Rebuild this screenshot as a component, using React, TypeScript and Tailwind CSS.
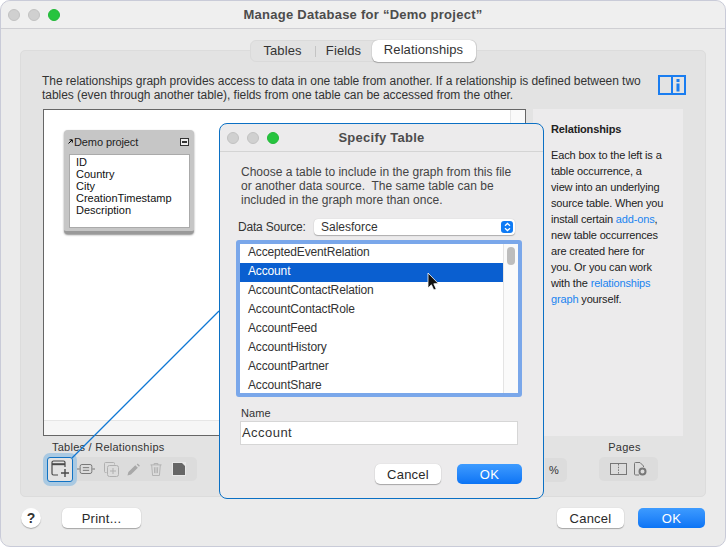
const font = { fontFamily: '"Liberation Sans", Arial, sans-serif' };

function Lights({ left = 'ml-[6px]' }: { left?: string }) {
  return (
    <div className={`flex gap-[8px] ${left}`}>
      <span className="w-[12px] h-[12px] rounded-full bg-[#d0d0d0] border border-[#c2c2c2]" />
      <span className="w-[12px] h-[12px] rounded-full bg-[#d0d0d0] border border-[#c2c2c2]" />
      <span className="w-[12px] h-[12px] rounded-full bg-[#27c43f] border border-[#22b838]" />
    </div>
  );
}

function Btn({ children, primary, w }: { children: string; primary?: boolean; w: string }) {
  return primary ? (
    <button className={`block ${w} h-[20px] rounded-[5px] bg-gradient-to-b from-[#3d9bff] to-[#0a74f5] text-white text-[13px] leading-[19px] tracking-[0.3px]`}>{children}</button>
  ) : (
    <button className={`block ${w} h-[20px] rounded-[5px] bg-white text-[#2a2a2a] text-[13px] leading-[19px] tracking-[0.25px] shadow-[0_1px_1px_rgba(0,0,0,0.28),0_0_1px_rgba(0,0,0,0.2)]`}>{children}</button>
  );
}

function NewTableIcon() {
  return (
    <svg width="22" height="20" viewBox="0 0 22 20" fill="none" stroke="#4a4a4a" strokeWidth="1.2">
      <path d="M9 16H4.5a1.5 1.5 0 0 1-1.5-1.5V3.5A1.5 1.5 0 0 1 4.5 2h10A1.5 1.5 0 0 1 16 3.5V8" />
      <path d="M3 5.2h13" strokeWidth="2" />
      <path d="M16 10v8M12 14h8" strokeWidth="1.4" />
    </svg>
  );
}

function ToolIcons() {
  return (
    <>
      <svg width="18" height="12" viewBox="0 0 20 12" fill="none" stroke="#777" strokeWidth="1.1">
        <path d="M0 6h3M17 6h3" />
        <rect x="3.5" y="1" width="13" height="10" rx="2" />
        <path d="M6.5 4.5h7M6.5 7.5h7" />
      </svg>
      <svg className="ml-[1px]" width="15" height="15" viewBox="0 0 15 15" fill="none" stroke="#b0b0b0" strokeWidth="1">
        <path d="M2.5 10.5h-1a1 1 0 0 1-1-1v-8a1 1 0 0 1 1-1h8a1 1 0 0 1 1 1v1" />
        <rect x="3.5" y="3.5" width="11" height="11" rx="2" />
        <path d="M9 6v6M6 9h6" />
      </svg>
      <svg width="13" height="13" viewBox="0 0 14 14" fill="#a8a8a8">
        <path d="M0.5 13.5l1-3.8 7.4-7.4 2.8 2.8-7.4 7.4zM10.5 1.6l1-1 2.4 2.4-1 1z" />
      </svg>
      <svg className="ml-[2px]" width="12" height="15" viewBox="0 0 13 15" fill="none" stroke="#b0b0b0" strokeWidth="1">
        <path d="M0.5 2.5h12M4.5 2.5v-1.5h4v1.5M1.8 2.5l1 11.5h7.4l1-11.5M4.7 5l.3 6.5M8.3 5l-.3 6.5M6.5 5v6.5" />
      </svg>
      <svg className="ml-[2px]" width="14" height="14" viewBox="0 0 14 14">
        <rect x="0" y="0" width="14" height="14" fill="#e8e8e8" />
        <path d="M1 1h9l3 3v9H1z" fill="#666" />
      </svg>
    </>
  );
}

const rows = ['AcceptedEventRelation', 'Account', 'AccountContactRelation', 'AccountContactRole', 'AccountFeed', 'AccountHistory', 'AccountPartner', 'AccountShare'];

function Dialog() {
  return (
    <div className="absolute left-[219px] top-[123px] w-[325px] h-[376px] rounded-[8px] border border-[#0b70c4] bg-[#ecebec] flex flex-col z-20">
      <div className="h-[28px] shrink-0 border-b border-[#d4d4d4] flex items-center relative">
        <Lights left="ml-[7px]" />
        <div className="absolute inset-0 flex items-center justify-center text-[13px] font-bold text-[#4c4c4c] tracking-[0.25px]">Specify Table</div>
      </div>
      <div className="pl-[21px] pt-[13px] text-[12px] leading-[14px] text-[#444] whitespace-pre">
        {'Choose a table to include in the graph from this file\nor another data source.  The same table can be\nincluded in the graph more than once.'}
      </div>
      <div className="flex items-center mt-[11px] h-[17px]">
        <span className="ml-[18px] w-[76px] text-[12px] text-[#333] tracking-[-0.2px]">Data Source:</span>
        <div className="w-[201px] h-[16px] rounded-[4px] bg-white shadow-[0_1px_1px_rgba(0,0,0,0.25),0_0_1px_rgba(0,0,0,0.2)] flex items-center justify-between pl-[7px] pr-[2px] text-[12px] text-[#333]">
          <span>Salesforce</span>
          <span className="w-[12px] h-[12px] rounded-[3px] bg-[#0f7bf5] flex items-center justify-center">
            <svg width="7" height="10" viewBox="0 0 7 10" fill="none" stroke="white" strokeWidth="1.3"><path d="M1 3.8L3.5 1.5 6 3.8M1 6.2l2.5 2.3L6 6.2" /></svg>
          </span>
        </div>
      </div>
      <div className="mt-[5px] ml-[16px] w-[286px] h-[157px] border-[4px] border-[#7aa7ea] rounded-[3px] bg-white flex overflow-hidden">
        <div className="flex-1 flex flex-col">
          {rows.map((r) => (
            <div key={r} className={`h-[19px] shrink-0 pl-[8px] text-[12px] leading-[17px] tracking-[-0.15px] ${r === 'Account' ? 'bg-[#0a5fd0] text-white' : 'text-[#333]'}`}>{r}</div>
          ))}
        </div>
        <div className="w-[15px] border-l border-[#e4e4e4] bg-[#fafafa] pl-[3px] pt-[3px]">
          <div className="w-[8px] h-[18px] rounded-[4px] bg-[#bdbdbd]" />
        </div>
      </div>
      <div className="ml-[21px] mt-[9px] text-[11px] leading-[14px] text-[#333] tracking-[0.1px]">Name</div>
      <div className="ml-[20px] mt-[1px] w-[278px] h-[24px] bg-white border border-[#d6d6d6] pl-[1px] text-[13px] leading-[22px] text-[#333] tracking-[0.45px]">Account</div>
      <div className="flex justify-end gap-[16px] mt-[19px] pr-[21px]">
        <Btn w="w-[66px]">Cancel</Btn>
        <Btn w="w-[65px]" primary>OK</Btn>
      </div>
    </div>
  );
}

export default function App() {
  return (
    <div className="relative w-[726px] h-[547px] bg-white overflow-hidden" style={font}>
      <div className="w-[726px] h-[547px] rounded-[10px] border border-[#c9cbd8] bg-[#ebebeb] flex flex-col">
        <div className="h-[28px] shrink-0 border-b border-[#cfcfd3] bg-[#efefef] rounded-t-[10px] flex items-center relative">
          <Lights left="ml-[7px]" />
          <div className="absolute inset-0 flex items-center justify-center text-[13px] font-bold text-[#4c4c4c] tracking-[0.25px]">Manage Database for “Demo project”</div>
        </div>

        <div className="px-[19px] pt-[11px] flex flex-col flex-1">
          <div className="self-center -mb-[12px] z-10 flex items-center w-[227px] h-[22px] rounded-[6px] bg-[#e2e2e2] border border-[#dadada] text-[13px] tracking-[0.1px] text-[#333]">
            <span className="w-[64px] text-center">Tables</span>
            <span className="w-px h-[11px] bg-[#c4c4c4]" />
            <span className="w-[56px] text-center">Fields</span>
            <span className="flex-1 h-[22px] rounded-[6px] bg-white text-center leading-[20px] shadow-[0_1px_1px_rgba(0,0,0,0.25),0_0_1px_rgba(0,0,0,0.3)]">Relationships</span>
          </div>

          <div className="w-[686px] h-[447px] rounded-[5px] bg-[#e3e3e3] border border-[#dcdcdc] flex flex-col relative">
            <div className="flex items-start pl-[21px] pt-[23px]">
              <div className="w-[615px] text-[12px] leading-[14px] text-[#333] tracking-[-0.05px] whitespace-pre">
                <div>The relationships graph provides access to data in one table from another. If a relationship is defined between two</div>
                <div>tables (even through another table), fields from one table can be accessed from the other.</div>
              </div>
              <svg className="mt-[1px] ml-[1px]" width="28" height="20" viewBox="0 0 28 20" fill="none">
                <rect x="1" y="1" width="26" height="18" stroke="#1a7df0" strokeWidth="2" />
                <path d="M14 1v18" stroke="#1a7df0" strokeWidth="2" />
                <rect x="18.5" y="4" width="3" height="3" fill="#1a7df0" />
                <rect x="18.5" y="8.5" width="3" height="8" fill="#1a7df0" />
              </svg>
            </div>

            <div className="flex mt-[7px] pl-[22px]">
              <div className="w-[483px] h-[327px] bg-white border border-[#666] flex flex-col">
                <div className="flex-1 flex">
                  <div className="flex-1 pl-[20px] pt-[20px]">
                    <div className="w-[130px] h-[104px] rounded-[4px] bg-[#c6c6c6] shadow-[0_1px_2px_rgba(0,0,0,0.45)] border-b-[3px] border-[#9a9a9a] px-[5px] flex flex-col">
                      <div className="h-[24px] shrink-0 flex items-center justify-between pb-[1px]">
                        <span className="text-[11px] leading-[14px] text-[#222] tracking-[-0.1px] flex items-center">
                          <svg className="-ml-[1px] mr-[1px]" width="5" height="5" viewBox="0 0 5 5" fill="none" stroke="#000" strokeWidth="1"><path d="M0.5 4.5L4 1M1.5 0.8h2.8v2.8" /></svg>
                          <span>Demo project</span>
                        </span>
                        <span className="w-[9px] h-[8px] bg-[#eee] border-[1px] border-[#333] flex items-center justify-center">
                          <span className="w-[5px] h-[2px] border-y border-[#333]" />
                        </span>
                      </div>
                      <div className="w-[121px] h-[74px] bg-white border border-[#aaa] pl-[6px] pt-[1px] text-[11px] leading-[12px] text-[#111]">
                        <div>ID</div><div>Country</div><div>City</div><div>CreationTimestamp</div><div>Description</div>
                      </div>
                    </div>
                  </div>
                  <div className="w-[15px] bg-[#fafafa] border-l border-[#e6e6e6]" />
                </div>
                <div className="h-[15px] bg-[#f6f6f6] border-t border-[#e6e6e6]" />
              </div>
              <div className="ml-[7px] w-[150px] h-[327px] bg-[#ecebec] pl-[18px] pt-[13px] text-[11px] leading-[16px] tracking-[-0.15px] text-[#222]">
                <div className="font-bold text-[11px] leading-[14px] mb-[11px]">Relationships</div>
                <div className="whitespace-pre">
                  <div>Each box to the left is a</div>
                  <div>table occurrence, a</div>
                  <div>view into an underlying</div>
                  <div>source table. When you</div>
                  <div>install certain <span className="text-[#1a84f0]">add-ons</span>,</div>
                  <div>new table occurrences</div>
                  <div>are created here for</div>
                  <div>you. Or you can work</div>
                  <div>with the <span className="text-[#1a84f0]">relationships</span></div>
                  <div><span className="text-[#1a84f0]">graph</span> yourself.</div>
                </div>
              </div>
            </div>

            <div className="flex-1 relative flex pl-[26px] pt-[4px]">
              <div className="flex flex-col">
                <span className="pl-[5px] text-[11px] leading-[14px] text-[#333] tracking-[0.25px]">Tables / Relationships</span>
                <div className="mt-[3px] w-[150px] h-[24px] rounded-[5px] bg-[#dcdcdc] flex items-center relative">
                  <div className="w-[26px] h-[25px] shrink-0 rounded-[3px] border border-[#1273c4] bg-[#e3e3e3] shadow-[0_0_0_4px_#a9c9e2] flex items-center justify-center"><NewTableIcon /></div>
                  <div className="flex items-center gap-[8px] pl-[4px]"><ToolIcons /></div>
                </div>
              </div>
              <div className="ml-[348px] flex items-end pb-[14px]">
                <div className="w-[22px] h-[24px] rounded-r-[5px] bg-[#dcdcdc] flex items-center justify-center pr-[4px] text-[11px] text-[#333]">%</div>
              </div>
              <div className="flex flex-col items-center ml-[32px]">
                <span className="pr-[8px] text-[11px] leading-[14px] text-[#333] tracking-[0.25px]">Pages</span>
                <div className="mt-[3px] w-[59px] h-[24px] rounded-[5px] bg-[#dcdcdc] flex items-center justify-center gap-[7px]">
                  <svg width="17" height="12" viewBox="0 0 17 12" fill="none" stroke="#777" strokeWidth="1">
                    <rect x="0.5" y="0.5" width="16" height="11" />
                    <path d="M8.5 1v10" strokeDasharray="1.5 1.2" />
                  </svg>
                  <svg width="13" height="14" viewBox="0 0 13 14" fill="none" stroke="#777" strokeWidth="1">
                    <path d="M5 13H1.5a1 1 0 0 1-1-1V1.5a1 1 0 0 1 1-1H6L9.5 4v1" />
                    <circle cx="8.5" cy="9.5" r="3" strokeWidth="2" />
                  </svg>
                </div>
              </div>
            </div>
          </div>

          <div className="flex items-center mt-[11px] pr-[1px]">
            <span className="ml-[1px] w-[20px] h-[20px] rounded-full bg-white shadow-[0_1px_1px_rgba(0,0,0,0.28)] text-[14px] font-bold text-[#333] text-center leading-[20px]">?</span>
            <div className="ml-[21px]"><Btn w="w-[79px]">Print...</Btn></div>
            <div className="ml-auto flex gap-[14px]">
              <Btn w="w-[67px]">Cancel</Btn>
              <Btn w="w-[67px]" primary>OK</Btn>
            </div>
          </div>
        </div>
      </div>

      <Dialog />

      <svg className="absolute left-[0px] top-[0px] z-30 pointer-events-none" width="726" height="547" viewBox="0 0 726 547" fill="none">
        <path d="M219 311L72 458" stroke="#0f78d4" strokeWidth="1.2" />
        <path d="M428 273v15l3.4-3.2 2.4 5.2 2.4-1.1-2.4-5.1 4.6-.2z" fill="#111" stroke="#fff" strokeWidth="0.8" />
      </svg>
    </div>
  );
}
